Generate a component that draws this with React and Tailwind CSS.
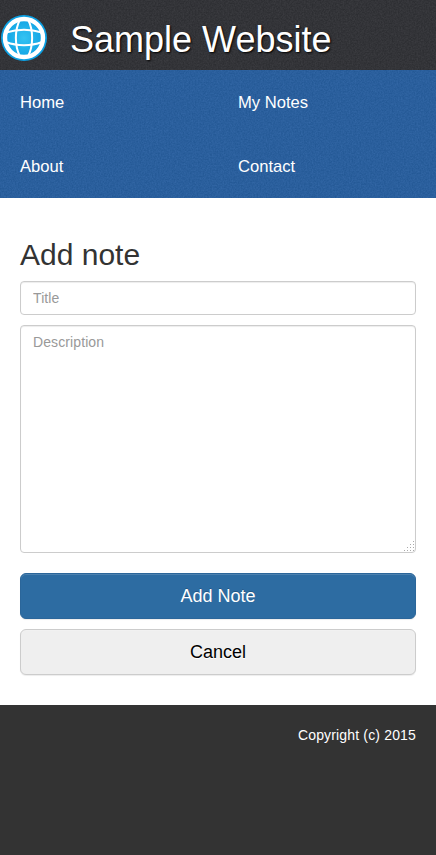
import React from "react";

// Fine monochrome grain laid over the header and navigation bars.
function Grain({ id, matrix }) {
  return (
    <svg className="pointer-events-none absolute inset-0 h-full w-full" aria-hidden="true">
      <filter id={id} x="0" y="0" width="100%" height="100%" colorInterpolationFilters="sRGB">
        <feTurbulence type="fractalNoise" baseFrequency="0.65" numOctaves="3" seed="4" />
        <feColorMatrix values={matrix} />
      </filter>
      <rect width="100%" height="100%" filter={`url(#${id})`} />
    </svg>
  );
}

function Globe() {
  return (
    <svg className="h-[46px] w-[46px]" viewBox="0 0 46 46" fill="none">
      <defs>
        <radialGradient id="globe">
          <stop offset="0" stopColor="#35c3f2" />
          <stop offset="1" stopColor="#0a9ee2" />
        </radialGradient>
      </defs>
      <circle cx="23" cy="23" r="23" fill="url(#globe)" />
      <g stroke="#fff">
        <circle cx="23" cy="23" r="19" strokeWidth="4.4" />
        <g strokeWidth="2">
          <path d="M19 4.5C13.5 15 13.5 31 19 41.5M27 4.5C32.5 15 32.5 31 27 41.5" />
          <path d="M5 17.5C16 14 30 14 41 17.5M5 27C16 31.3 30 31.3 41 27" />
        </g>
      </g>
    </svg>
  );
}

const links = ["Home", "My Notes", "About", "Contact"];

export default function App() {
  return (
    <div className="flex min-h-screen flex-col bg-white font-['Liberation_Sans',Arial,sans-serif] text-sm text-[#333]">
      <header className="relative h-[70px] bg-[#2d2e32]">
        <Grain id="grain-dark" matrix="0 0 0 0 0.36 0 0 0 0 0.36 0 0 0 0 0.38 0.5 0 0 0 -0.12" />
        <div className="relative flex h-full items-center pt-[5px] pl-px">
          <Globe />
          <h1 className="ml-[23px] pt-1 text-[36px] leading-[40px] text-white [text-shadow:1px_1px_2px_#000]">Sample Website</h1>
        </div>
      </header>
      <nav className="relative h-32 bg-[#245996]">
        <Grain id="grain-blue" matrix="0 0 0 0 0.3 0 0 0 0 0.5 0 0 0 0 0.76 0.55 0 0 0 -0.12" />
        <ul className="relative grid grid-cols-2">
          {links.map((name) => (
            <li key={name} className="h-16 pl-5 text-[16.6px] leading-[65px] text-white">
              <a href="#">{name}</a>
            </li>
          ))}
        </ul>
      </nav>
      <main className="flex flex-col px-5 pt-10 pb-[30px]">
        <h2 className="mb-[10px] text-[30px] leading-[33px]">Add note</h2>
        <input
          placeholder="Title"
          className="h-[34px] rounded border border-[#ccc] px-3 shadow-[inset_0_1px_1px_rgba(0,0,0,0.075)] placeholder:tracking-[0.1px] placeholder:text-[#999]"
        />
        <textarea
          placeholder="Description"
          className="mt-[10px] h-[228px] resize-none rounded border border-[#ccc] px-3 py-1.5 leading-5 shadow-[inset_0_1px_1px_rgba(0,0,0,0.075)] placeholder:tracking-[0.1px] placeholder:text-[#999]"
        />
        <svg className="relative -mt-3 mr-0.5 h-[10px] w-[10px] self-end" viewBox="0 0 10 10" fill="#aaa">
          {[[9, 0], [9, 3], [6, 3], [9, 6], [6, 6], [3, 6], [9, 9], [6, 9], [3, 9], [0, 9]].map(([x, y]) => (
            <rect key={`${x}-${y}`} x={x} y={y} width="1" height="1" />
          ))}
        </svg>
        <button className="mt-[22px] h-[46px] rounded-md border border-[#2b669a] bg-[#2d6ca2] text-lg text-white shadow-[inset_0_1px_0_rgba(255,255,255,0.15),0_1px_1px_rgba(0,0,0,0.075)] [text-shadow:0_-1px_0_rgba(0,0,0,0.2)]">
          Add Note
        </button>
        <button className="mt-[10px] h-[46px] rounded-md border border-[#ccc] bg-[#efefef] text-lg text-black shadow-[inset_0_1px_0_rgba(255,255,255,0.15),0_1px_1px_rgba(0,0,0,0.075)] [text-shadow:0_1px_0_#fff]">
          Cancel
        </button>
      </main>
      <footer className="flex-1 bg-[#333] px-5 pt-5 text-right leading-5 tracking-[0.16px] text-white">Copyright (c) 2015</footer>
    </div>
  );
}
